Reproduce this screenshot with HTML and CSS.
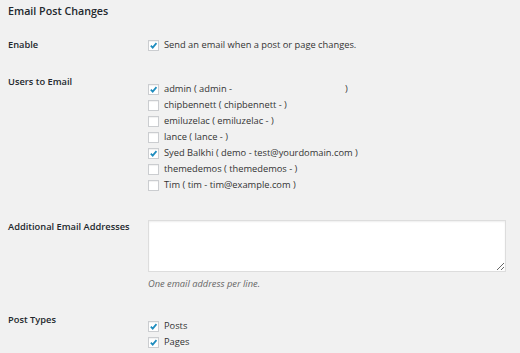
FILE: index.html
```html
<!DOCTYPE html>
<html>
<head>
  <title>Email Post Changes</title>
  <link rel="stylesheet" href="styles.css">
</head>
<body>
  <h2 class="page-title">Email Post Changes</h2>

  <div class="form-row">
    <div class="label">Enable</div>
    <div class="field">
      <label class="check"><span class="box on"><svg viewBox="0 0 10 10"><path d="M2 5.2 L4.1 7.4 L8.3 2.4"/></svg></span>Send an email when a post or page changes.</label>
    </div>
  </div>

  <div class="form-row">
    <div class="label">Users to Email</div>
    <div class="field list">
      <label class="check"><span class="box on"><svg viewBox="0 0 10 10"><path d="M2 5.2 L4.1 7.4 L8.3 2.4"/></svg></span>admin ( admin - <span class="blank"></span>)</label>
      <label class="check"><span class="box"></span>chipbennett ( chipbennett - )</label>
      <label class="check"><span class="box"></span>emiluzelac ( emiluzelac - )</label>
      <label class="check"><span class="box"></span>lance ( lance - )</label>
      <label class="check"><span class="box on"><svg viewBox="0 0 10 10"><path d="M2 5.2 L4.1 7.4 L8.3 2.4"/></svg></span>Syed Balkhi ( demo - test@yourdomain.com )</label>
      <label class="check"><span class="box"></span>themedemos ( themedemos - )</label>
      <label class="check"><span class="box"></span>Tim ( tim - tim@example.com )</label>
    </div>
  </div>

  <div class="form-row">
    <div class="label">Additional Email Addresses</div>
    <div class="field">
      <textarea class="emails"></textarea>
      <p class="description">One email address per line.</p>
    </div>
  </div>

  <div class="form-row">
    <div class="label">Post Types</div>
    <div class="field list types">
      <label class="check"><span class="box on"><svg viewBox="0 0 10 10"><path d="M2 5.2 L4.1 7.4 L8.3 2.4"/></svg></span>Posts</label>
      <label class="check"><span class="box on"><svg viewBox="0 0 10 10"><path d="M2 5.2 L4.1 7.4 L8.3 2.4"/></svg></span>Pages</label>
    </div>
  </div>
</body>
</html>
```

FILE: styles.css
```css
body {
  margin: 0;
  padding: 0 8px;
  background-color: #f1f1f1;
  font-family: "Open Sans", "Liberation Sans", sans-serif;
  font-size: 9.3px;
  color: #333;
  overflow: hidden;
}

.page-title {
  margin: 0 0 8px;
  padding-top: 3px;
  font-size: 10.7px;
  line-height: 16px;
  font-weight: 600;
  color: #23282d;
}

.form-row {
  display: grid;
  grid-template-columns: 140px 1fr;
  padding: 10px 0 11px;
}

.label {
  line-height: 16px;
  font-weight: 600;
  color: #23282d;
}

.field {
  line-height: 16px;
}

.list {
  display: flex;
  flex-direction: column;
  margin: 7px 0 5px;
}

.types {
  margin: 6px 0 0;
}

.check {
  display: flex;
  align-items: center;
  height: 16px;
  white-space: nowrap;
}

.box {
  width: 11px;
  height: 11px;
  box-sizing: border-box;
  border: 1px solid #cbcdd0;
  background: #fff;
  box-shadow: inset 0 1px 1px rgba(0,0,0,.06);
  margin-right: 5px;
  display: flex;
  align-items: center;
  justify-content: center;
}

.box svg {
  width: 9px;
  height: 9px;
  fill: none;
  stroke: #1e8cbe;
  stroke-width: 1.9;
}

.blank {
  display: inline-block;
  width: 113px;
}

.emails {
  display: block;
  width: 358px;
  height: 52px;
  box-sizing: border-box;
  margin: 1px 0 0;
  border: 1px solid #ddd;
  background: #fff;
  box-shadow: inset 0 1px 2px rgba(0,0,0,.07);
  resize: both;
}

.description {
  margin: 5px 0 0;
  line-height: 14px;
  font-style: italic;
  color: #666;
}
```
